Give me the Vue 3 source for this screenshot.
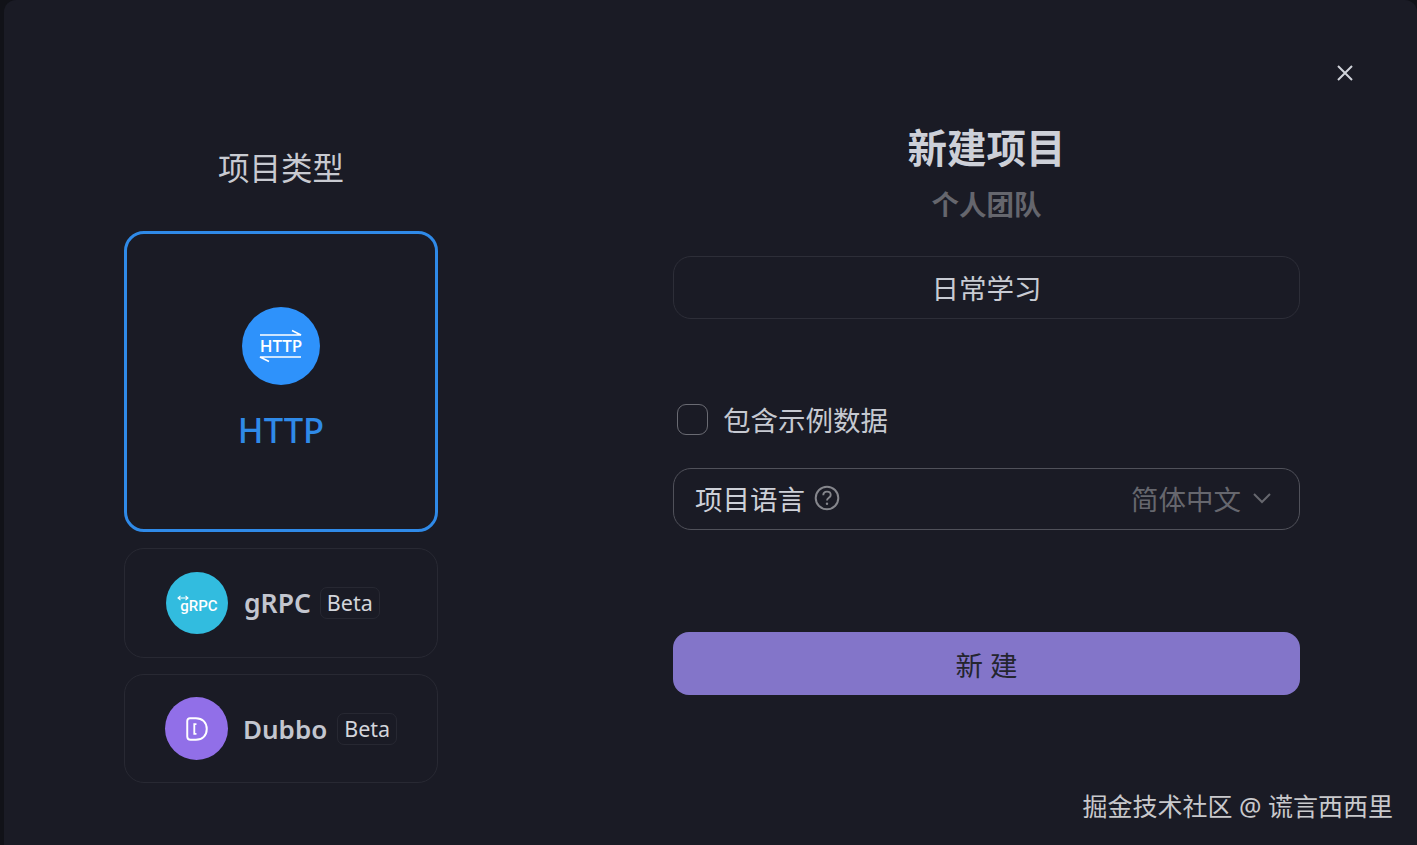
<template>
  <div class="panel">
    <button class="close-btn">
      <svg width="18" height="18" viewBox="0 0 18 18"><path d="M2 2l14 14M16 2L2 16" stroke="#d0d3da" stroke-width="2" fill="none" /></svg>
    </button>

    <section class="types">
      <h3 class="types-title">项目类型</h3>

      <div class="card-main">
        <div class="icon-http">
          <svg class="arrow" width="44" height="8" viewBox="0 0 44 8"><path d="M1 6h41L33 1.500" stroke="#fff" stroke-width="1.600" fill="none" /></svg>
          <span>HTTP</span>
          <svg class="arrow" width="44" height="8" viewBox="0 0 44 8"><path d="M42 2H1l9 4.500" stroke="#fff" stroke-width="1.600" fill="none" /></svg>
        </div>
        <p class="main-name">HTTP</p>
      </div>

      <div class="card-small grpc">
        <div class="icon-grpc">
          <svg class="grpc-arrow" width="12" height="6" viewBox="0 0 12 6"><path d="M1 3h10M3.500 .8L1 3l2.500 2.200M8.500 .8L11 3 8.500 5.200" stroke="#fff" stroke-width="1.100" fill="none" /></svg>
          <span>gRPC</span>
        </div>
        <span class="small-name">gRPC</span>
        <span class="beta">Beta</span>
      </div>

      <div class="card-small dubbo">
        <div class="icon-dubbo">
          <svg width="24" height="26" viewBox="0 0 22 24">
            <path d="M4.500 2h5.500c6 0 10 4 10 10s-4 10-10 10H5c-2 0-3-1-3-3V4.500C2 3 3 2 4.500 2z" stroke="#fff" stroke-width="1.800" fill="none" />
            <path d="M10.500 7.500H8.500v9h2" stroke="#fff" stroke-width="1.700" fill="none" />
          </svg>
        </div>
        <span class="small-name">Dubbo</span>
        <span class="beta">Beta</span>
      </div>
    </section>

    <section class="form">
      <h2 class="form-title">新建项目</h2>
      <p class="form-team">个人团队</p>

      <div class="name-input">日常学习</div>

      <label class="sample-row">
        <span class="checkbox"></span>
        <span>包含示例数据</span>
      </label>

      <div class="lang-select">
        <span class="lang-label">项目语言</span>
        <svg width="26" height="26" viewBox="0 0 26 26">
          <circle cx="13" cy="13" r="11.300" stroke="#85868c" stroke-width="2" fill="none" />
          <path d="M9.300 10.300c0-2.200 1.600-3.700 3.700-3.700s3.700 1.400 3.700 3.300c0 2.900-3.700 2.900-3.700 5.600" stroke="#85868c" stroke-width="1.900" fill="none" />
          <circle cx="13" cy="18.800" r="1.200" fill="#85868c" />
        </svg>
        <span class="lang-value">简体中文</span>
        <svg class="chevron" width="20" height="12" viewBox="0 0 20 12"><path d="M2 2l8 8 8-8" stroke="#66676e" stroke-width="2" fill="none" /></svg>
      </div>

      <button class="submit-btn">新 建</button>
    </section>

    <div class="watermark">掘金技术社区 @ 谎言西西里</div>
  </div>
</template>

<script setup>
</script>

<style scoped>
.panel {
  position: relative;
  box-sizing: border-box;
  display: flex;
  height: 845px;
  margin-left: 4px;
  padding-left: 120px;
  background: #1a1b25;
  border-top-left-radius: 12px;
  border-top-right-radius: 12px;
  color: #cdd0d8;
  font-family: "Noto Sans", "Noto Sans CJK SC", sans-serif;
  overflow: hidden;
}

.close-btn {
  position: absolute;
  top: 64px;
  right: 63px;
  width: 18px;
  height: 18px;
  padding: 0;
  background: none;
  border: none;
  cursor: pointer;
}

.close-btn svg {
  display: block;
}

.types {
  width: 314px;
  flex-shrink: 0;
}

.types-title {
  margin: 146px 0 0;
  height: 44px;
  font-size: 31.500px;
  line-height: 44px;
  font-weight: 400;
  text-align: center;
  color: #c8cad1;
}

.card-main {
  box-sizing: border-box;
  display: flex;
  flex-direction: column;
  align-items: center;
  height: 301px;
  margin-top: 41px;
  padding-top: 73px;
  border: 3px solid #2f8ae8;
  border-radius: 20px;
}

.icon-http {
  display: flex;
  flex-direction: column;
  align-items: center;
  justify-content: center;
  width: 78px;
  height: 78px;
  border-radius: 50%;
  background: #2e92fb;
  color: #fff;
  font-size: 17px;
  line-height: 18px;
  font-family: "Open Sans", sans-serif;
  font-weight: 600;
}

.arrow {
  display: block;
}

.main-name {
  margin: 22px 0 0;
  font-size: 34.500px;
  line-height: 45px;
  font-weight: 500;
  color: #2f8ae8;
}

.card-small {
  box-sizing: border-box;
  display: flex;
  align-items: center;
  border: 1px solid #282933;
  border-radius: 20px;
}

.grpc {
  height: 110px;
  margin-top: 16px;
  padding-left: 41px;
}

.dubbo {
  height: 109px;
  margin-top: 16px;
  padding-left: 40px;
}

.icon-grpc {
  position: relative;
  display: flex;
  align-items: center;
  justify-content: center;
  width: 62px;
  height: 62px;
  border-radius: 50%;
  background: #32bcdf;
  color: #fff;
  font-family: "Roboto", sans-serif;
  font-size: 15px;
  font-weight: 500;
}

.icon-grpc span {
  margin-top: 5px;
  margin-left: 4px;
}

.grpc-arrow {
  position: absolute;
  top: 23px;
  left: 11px;
}

.icon-dubbo {
  display: flex;
  align-items: center;
  justify-content: center;
  width: 63px;
  height: 63px;
  border-radius: 50%;
  background: #916fe8;
}

.small-name {
  margin-left: 16px;
  font-size: 26.500px;
  line-height: 36px;
  font-weight: 600;
  color: #c3c6cf;
}

.beta {
  box-sizing: border-box;
  height: 32px;
  margin-left: 9px;
  padding: 0 6px;
  border: 1px solid #272832;
  border-radius: 7px;
  font-size: 21.500px;
  line-height: 30px;
  color: #d3d5db;
}

.dubbo .small-name {
  margin-left: 15px;
  font-size: 26px;
}

.dubbo .beta {
  margin-left: 10px;
}

.form {
  width: 627px;
  flex-shrink: 0;
  margin-left: 235px;
}

.form-title {
  margin: 121px 0 0;
  font-size: 39.500px;
  line-height: 54px;
  font-weight: 700;
  text-align: center;
  color: #cdd0d8;
}

.form-team {
  margin: 11px 0 0;
  font-size: 27.500px;
  line-height: 38px;
  font-weight: 700;
  text-align: center;
  color: #65666d;
}

.name-input {
  box-sizing: border-box;
  height: 63px;
  margin-top: 32px;
  border: 1px solid #2d2e38;
  border-radius: 18px;
  font-size: 27.500px;
  line-height: 63px;
  text-align: center;
  color: #c8cbd3;
}

.sample-row {
  display: flex;
  align-items: center;
  gap: 15px;
  margin-top: 82px;
  padding-left: 4px;
  font-size: 27.500px;
  line-height: 40px;
  color: #c6c9d1;
}

.checkbox {
  box-sizing: border-box;
  width: 31px;
  height: 31px;
  margin-bottom: 4px;
  border: 1px solid #6a6b73;
  border-radius: 9px;
}

.lang-select {
  box-sizing: border-box;
  display: flex;
  align-items: center;
  height: 62px;
  margin-top: 27px;
  padding: 0 27px 2px 21px;
  border: 1px solid #50515a;
  border-radius: 18px;
}

.lang-label {
  margin-right: 9px;
  font-size: 27.500px;
  color: #cdd0d8;
}

.lang-value {
  margin-left: auto;
  font-size: 27.500px;
  color: #66676e;
}

.chevron {
  margin-left: 11px;
}

.submit-btn {
  display: block;
  width: 627px;
  height: 63px;
  margin-top: 102px;
  padding: 1px 0 0;
  border: none;
  border-radius: 16px;
  background: #8375c9;
  color: #24252e;
  font-family: inherit;
  font-size: 27.500px;
  cursor: pointer;
}

.watermark {
  position: absolute;
  right: 24px;
  bottom: 21px;
  font-size: 25px;
  line-height: 36px;
  color: #c9c9cc;
}
</style>

<style>
body {
  background: #111218;
}
</style>
